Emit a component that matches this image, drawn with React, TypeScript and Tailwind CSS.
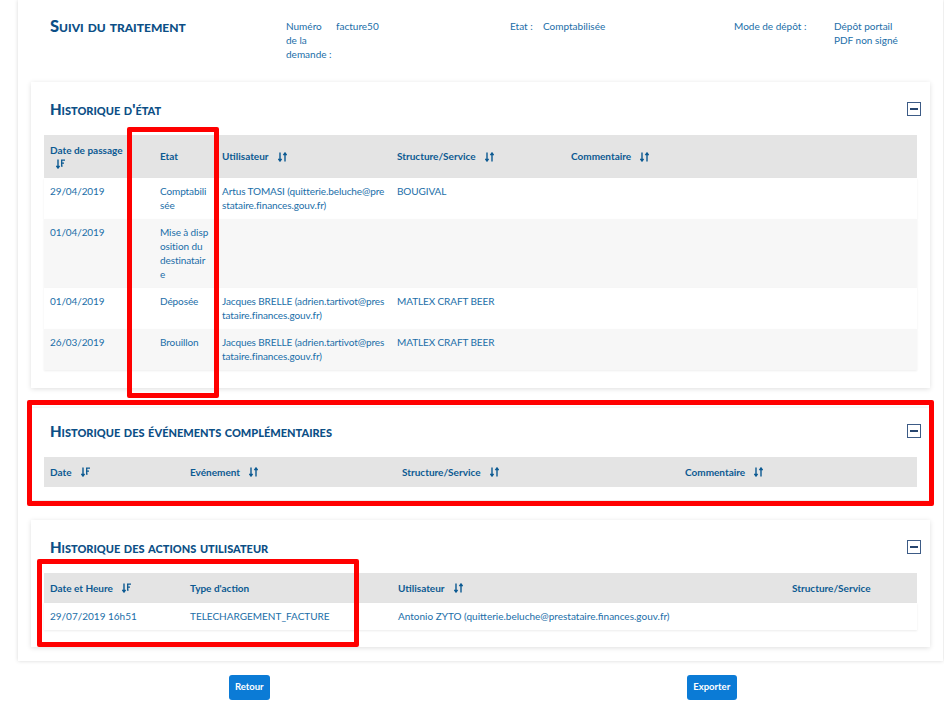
import React from 'react'

const font = { fontFamily: 'Lato, "Noto Sans", sans-serif' }

function SortBoth() {
  return (
    <svg width="9" height="10" viewBox="0 0 9 10" className="inline-block shrink-0">
      <path d="M2 0.5v8.5M0.4 6.8L2 9L3.6 6.8" stroke="#0c5a92" strokeWidth="1.4" fill="none" />
      <path d="M7 9.5V1M5.4 3.2L7 1L8.6 3.2" stroke="#0c5a92" strokeWidth="1.4" fill="none" />
    </svg>
  )
}

function SortDesc() {
  return (
    <svg width="9" height="10" viewBox="0 0 9 10" className="inline-block shrink-0">
      <path d="M2 0.5v8.5M0.4 6.8L2 9L3.6 6.8" stroke="#0c5a92" strokeWidth="1.4" fill="none" />
      <path d="M5 1.2h4M5 4.2h3M5 7.2h1.6M5.7 1v6.8" stroke="#0c5a92" strokeWidth="1.3" fill="none" />
    </svg>
  )
}

function Minus() {
  return (
    <div className="flex h-[14px] w-[14px] items-center justify-center border-[1.5px] border-[#3d5b86] bg-white -mr-[4px]">
      <div className="h-[2.5px] w-[8px] bg-[#27466f]" />
    </div>
  )
}

function Card({ title, children, className = 'pt-[19px] pb-[18px]' }: { title: string; children: React.ReactNode; className?: string }) {
  return (
    <div className={`bg-white px-[13px] shadow-[0_1px_5px_rgba(0,0,0,0.13)] ${className}`}>
      <div className="mb-[18px] flex h-4 items-center justify-between">
        <h2 className="pl-[6px] text-[15px] font-black leading-4 text-[#0c4f86] [font-variant-caps:small-caps]">
          {title}
        </h2>
        <Minus />
      </div>
      {children}
    </div>
  )
}

function Th({ children, tall }: { children: React.ReactNode; tall?: boolean }) {
  return (
    <th className={`px-[6px] text-left align-middle text-[10px] font-bold text-[#0c5a92] ${tall ? 'h-[43px]' : 'h-[30px]'}`}>
      {children}
    </th>
  )
}

function Label({ text, sort }: { text: string; sort?: 'both' | 'desc' }) {
  return (
    <span className="inline-flex items-center gap-[9px]">
      <span>{text}</span>
      {sort === 'both' && <SortBoth />}
      {sort === 'desc' && <SortDesc />}
    </span>
  )
}

const etatRows = [
  ['29/04/2019', 'Comptabilisée', 'Artus TOMASI (quitterie.beluche@prestataire.finances.gouv.fr)', 'BOUGIVAL', ''],
  ['01/04/2019', 'Mise à disposition du destinataire', '', '', ''],
  ['01/04/2019', 'Déposée', 'Jacques BRELLE (adrien.tartivot@prestataire.finances.gouv.fr)', 'MATLEX CRAFT BEER', ''],
  ['26/03/2019', 'Brouillon', 'Jacques BRELLE (adrien.tartivot@prestataire.finances.gouv.fr)', 'MATLEX CRAFT BEER', ''],
]

const td = 'px-[6px] pt-[6px] pb-[7px] align-top text-[10px] leading-[14px] text-[#1a6ea8]'

export default function App() {
  return (
    <div className="relative min-h-[707px] bg-white" style={font}>
      <div className="ml-[18px] w-[925px] bg-white px-[13px] pb-[14px] shadow-[0_0_4px_rgba(0,0,0,0.16)]">
        {/* en-tête */}
        <div className="flex pt-[18px] pb-[21px] pl-[19px] text-[10px] leading-[14px] text-[#1a6ea8]">
          <div className="w-[236px] text-[16.5px] font-black leading-4 text-[#0c4f86] [font-variant-caps:small-caps]">
            Suivi du traitement
          </div>
          <div className="w-[50px] pr-[4px] pt-px">Numéro de la demande :</div>
          <div className="w-[174px] pt-px">facture50</div>
          <div className="w-[33px] pt-px">Etat :</div>
          <div className="w-[191px] pt-px">Comptabilisée</div>
          <div className="w-[100px] pt-px">Mode de dépôt :</div>
          <div className="w-[72px] pt-px">Dépôt portail PDF non signé</div>
        </div>

        <div className="flex flex-col gap-[20px]">
          <Card title="Historique d'état">
            <table className="w-full table-fixed border-collapse">
              <colgroup>
                <col className="w-[110px]" />
                <col className="w-[62px]" />
                <col className="w-[175px]" />
                <col className="w-[174px]" />
                <col />
              </colgroup>
              <thead>
                <tr className="bg-[#e4e4e4]">
                  <Th tall>
                    <div className="leading-[12px]">Date de passage</div>
                    <div className="ml-[6px] mt-[1px] leading-[10px]"><SortDesc /></div>
                  </Th>
                  <Th tall>Etat</Th>
                  <Th tall><Label text="Utilisateur" sort="both" /></Th>
                  <Th tall><Label text="Structure/Service" sort="both" /></Th>
                  <Th tall><Label text="Commentaire" sort="both" /></Th>
                </tr>
              </thead>
              <tbody>
                {etatRows.map((r, i) => (
                  <tr key={i} className={`${i % 2 ? 'bg-[#f7f7f7]' : 'bg-white'} shadow-[0_1px_2px_rgba(0,0,0,0.07)]`}>
                    {r.map((c, j) => (
                      <td key={j} className={`${td} break-all tracking-[-0.1px]`}>
                        {c}
                      </td>
                    ))}
                  </tr>
                ))}
              </tbody>
            </table>
          </Card>

          <Card title="Historique des événements complémentaires" className="pt-[15px] pb-[13px]">
            <table className="w-full table-fixed border-collapse">
              <colgroup>
                <col className="w-[140px]" />
                <col className="w-[212px]" />
                <col className="w-[283px]" />
                <col />
              </colgroup>
              <thead>
                <tr className="bg-[#e4e4e4]">
                  <Th><Label text="Date" sort="desc" /></Th>
                  <Th><Label text="Evénement" sort="both" /></Th>
                  <Th><Label text="Structure/Service" sort="both" /></Th>
                  <Th><Label text="Commentaire" sort="both" /></Th>
                </tr>
              </thead>
            </table>
          </Card>

          <Card title="Historique des actions utilisateur" className="pt-[19px] pb-[17px]">
            <table className="w-full table-fixed border-collapse">
              <colgroup>
                <col className="w-[140px]" />
                <col className="w-[208px]" />
                <col className="w-[394px]" />
                <col />
              </colgroup>
              <thead>
                <tr className="bg-[#e4e4e4]">
                  <Th><Label text="Date et Heure" sort="desc" /></Th>
                  <Th>Type d'action</Th>
                  <Th><Label text="Utilisateur" sort="both" /></Th>
                  <Th>Structure/Service</Th>
                </tr>
              </thead>
              <tbody>
                <tr className="bg-white shadow-[0_1px_2px_rgba(0,0,0,0.08)]">
                  <td className={td}>29/07/2019 16h51</td>
                  <td className={td}>TELECHARGEMENT_FACTURE</td>
                  <td className={td}>Antonio ZYTO (quitterie.beluche@prestataire.finances.gouv.fr)</td>
                  <td className={td}></td>
                </tr>
              </tbody>
            </table>
          </Card>
        </div>
      </div>

      <div className="ml-[18px] mt-[14px] grid w-[925px] grid-cols-2">
        <div className="flex justify-center">
          <button className="h-[25px] w-[41px] rounded-[3px] bg-[#0b7bd6] text-[9.5px] font-bold text-white">Retour</button>
        </div>
        <div className="flex justify-center">
          <button className="h-[25px] w-[50px] rounded-[3px] bg-[#0b7bd6] text-[9.5px] font-bold text-white">Exporter</button>
        </div>
      </div>

      {/* annotations rouges */}
      <div className="pointer-events-none absolute left-[127px] top-[127px] h-[271px] w-[92px] rounded-[2px] border-[5px] border-[#ff0000]" />
      <div className="pointer-events-none absolute left-[27px] top-[400px] h-[106px] w-[907px] rounded-[2px] border-[5px] border-[#ff0000]" />
      <div className="pointer-events-none absolute left-[37px] top-[559px] h-[88px] w-[322px] rounded-[2px] border-[5px] border-[#ff0000]" />
    </div>
  )
}
